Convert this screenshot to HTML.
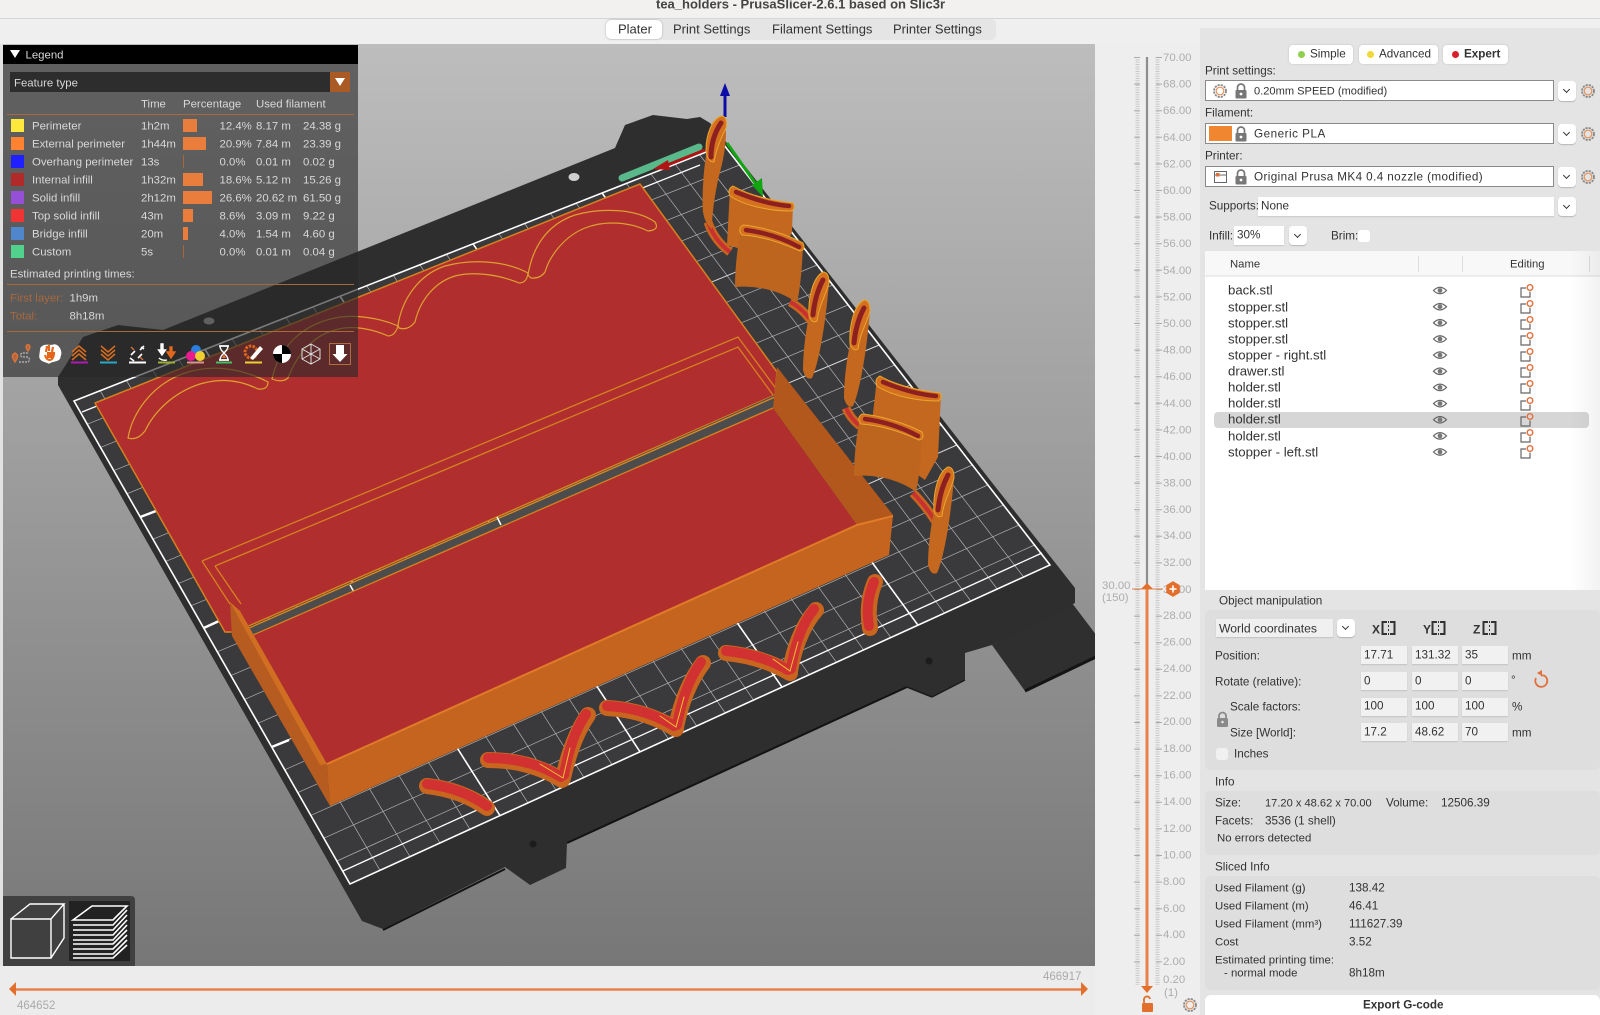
<!DOCTYPE html>
<html><head><meta charset="utf-8"><title>tea_holders - PrusaSlicer</title>
<style>
html,body{margin:0;padding:0;width:1600px;height:1015px;overflow:hidden;background:#ececec;font-family:"Liberation Sans",sans-serif;color:#333}
.a{position:absolute}
.t{position:absolute;transform:translateY(calc(-50% + .7px));white-space:nowrap;font-size:11.7px;line-height:14px}
.l{color:#d8d8d8;font-size:11.4px}
.o{color:#a8683f;font-size:11.4px}
.s{font-size:11.4px}
.f{position:absolute;background:#fff;box-shadow:0 1px 1px rgba(0,0,0,.12)}
.c{position:absolute;background:#fff;border:1px solid #8a8a8a;box-sizing:border-box;left:1205px;width:349px;height:21px}
.d{position:absolute;background:#fff;border-radius:4px;width:18px;box-shadow:0 1px 1px rgba(0,0,0,.2)}
.d:after{content:"";position:absolute;left:6px;top:50%;width:4px;height:4px;margin-top:-4px;border-right:1.6px solid #333;border-bottom:1.6px solid #333;transform:rotate(45deg)}
.i{position:absolute;background:#f1f1f1;box-shadow:0 1px 1px rgba(0,0,0,.12);height:18px;width:46px}
.m{position:absolute;background:#fff;border-radius:4px;height:19px;top:45px;box-shadow:0 0 2px rgba(0,0,0,.15)}
.p{position:absolute;background:#dedede;border-radius:5px;left:1205px;width:395px}
svg{position:absolute;left:0;top:0}
</style></head><body>

<!-- window chrome -->
<div class="a" style="left:0;top:0;width:1600px;height:18px;background:#f2f1ef;border-bottom:1px solid #d6d6d6"></div>
<div class="a" style="left:0;top:19px;width:1600px;height:26px;background:#efefef"></div>
<div class="a" style="left:0;top:966px;width:1200px;height:49px;background:#ececec"></div>
<div class="a" style="left:1095px;top:44px;width:105px;height:971px;background:#eeeeee"></div>
<div class="a" style="left:1200px;top:28px;width:400px;height:987px;background:#e4e4e4"></div>
<div class="t" style="left:656px;top:4px;font-weight:bold;font-size:13px;color:#444">tea_holders - PrusaSlicer-2.6.1 based on Slic3r</div>
<div class="a" style="left:606px;top:19px;width:390px;height:21px;background:#e5e5e5;border-radius:5px"></div>
<div class="a" style="left:606px;top:20px;width:56px;height:19px;background:#fff;border-radius:5px;box-shadow:0 0 2px rgba(0,0,0,.25)"></div>
<div class="t" style="left:618px;top:29px;font-size:13px">Plater</div>
<div class="t" style="left:673px;top:29px;font-size:13px">Print Settings</div>
<div class="t" style="left:772px;top:29px;font-size:13px">Filament Settings</div>
<div class="t" style="left:893px;top:29px;font-size:13px">Printer Settings</div>

<!-- 3D scene -->
<svg width="1600" height="1015" viewBox="0 0 1600 1015" fill="none">
<defs>
<linearGradient id="bg" x1="0" y1="0" x2="0" y2="1"><stop offset="0" stop-color="#bdbdbd"/><stop offset="1" stop-color="#777"/></linearGradient>
<g id="ob4"><path d="M809,316C805,335 803,355 803,370Q806,381 812,378C818,365 825,330 829,283Z" fill="#c4681f"/><path d="M823,272C812,278 808,300 809,316Q812,324 817,321C819,305 826,295 829,283Q829,272 823,272Z" fill="#d5701f" stroke="#e8a72e"/><path d="M823,280Q815,295 813,315" stroke="#8c2020" stroke-width="5" stroke-linecap="round"/></g>
<g id="cap2"><path d="M733,186C750,196 775,201 793,203Q796,209 791,211C770,211 745,206 730,196Q727,189 733,186Z" fill="#d5701f" stroke="#e8a72e"/><path d="M736,192Q765,204 789,206" stroke="#8c2020" stroke-width="4.5" stroke-linecap="round"/></g>
<g id="ob3"><path d="M741,228C760,232 790,240 803,245C802,270 800,290 797,303C780,290 755,285 735,287C735,265 738,245 741,228Z" fill="#bd651f"/><path d="M743,225C765,227 790,236 803,243Q806,250 800,251C780,242 760,236 742,235Q737,229 743,225Z" fill="#d5701f" stroke="#e8a72e"/><path d="M746,230Q775,234 799,247" stroke="#8c2020" stroke-width="4.5" stroke-linecap="round"/></g>
</defs>
<rect x="3" y="44" width="1092" height="922" fill="url(#bg)"/>
<clipPath id="sc"><rect x="3" y="44" width="1092" height="922"/></clipPath>
<g clip-path="url(#sc)">
<!-- rear tab -->
<path d="M1072,603L1100,640L1100,655L1025,691L992,645Z" fill="#2f2f2f"/>
<path d="M1100,655L1025,691" stroke="#141414" stroke-width="3"/>
<!-- bed -->
<path d="M58,385L58,377L67,363L83,337L118,325L163,330L615,148L625,125L653,115L687,119L700,117L710,123L727,143L990,480L1075,588L1075,603L992,645L965,653L965,680L932,697L907,687L567,843L566,868L530,885L505,867L383,929L362,921Z" fill="#2e2e2e"/>
<path d="M907,687L567,843M505,869L383,930" stroke="#131313" stroke-width="2"/>
<path d="M932,697L907,687M965,680L932,697" stroke="#1b1b1b" stroke-width="1.5"/>
<circle cx="929" cy="661" r="3.5" fill="#1c1c1c"/><circle cx="533" cy="844" r="3.5" fill="#1c1c1c"/>
<ellipse cx="574" cy="177" rx="5.5" ry="4" fill="#cfcfcf"/><ellipse cx="209" cy="321" rx="5.5" ry="3.5" fill="#bbb"/>
<!-- print area -->
<path d="M74,401L724,145L1050,565L350,884Z" fill="#3a3a3c"/>
<g stroke="#b0b0b0" stroke-width=".7">
<path d="M100.2,390.7L380,870.3M126.4,380.4L410,856.7M152.6,370L440,843M178.8,359.7L470,829.3M232,338.8L528,802.9M259,328.1L556,790.1M286,317.5L584,777.4M313,306.8L612,764.6M366.6,285.7L668.4,738.9M393.2,275.2L696.8,726M419.8,264.8L725.2,713M446.4,254.3L753.6,700.2M498.8,233.7L809.2,674.7M524.6,223.5L836.4,662.3M550.4,213.3L863.6,649.9M576.2,203.2L890.8,637.5M626.4,183.4L944.4,613.1M650.8,173.8L970.8,601M675.2,164.2L997.2,589M699.6,154.6L1023.6,577"/>
<path d="M87.3,424.2L739.5,165M100.5,447.4L755,185M113.8,470.6L770.6,205M127,493.8L786,225M153,539.2L817,265M165.7,561.4L832.6,285M178.3,583.6L848,305M191,605.8L863.7,325M217.3,651.8L894.7,365M230.9,675.6L910.2,385M244.5,699.4L925.8,405M258.1,723.2L941.3,425M284.7,769.8L972.3,465M297.8,792.6L987.8,485M310.8,815.4L1003.4,505M323.8,838.2L1018.9,525M336.9,861L1034.4,545"/>
<path d="M140.3,517L801.6,245M203.7,628L879.2,345M271.7,747L956.8,445" stroke="#d8d8d8" stroke-width="1"/>
</g>
<g stroke="#fff" stroke-width="1.6">
<path d="M205,349.4L500,815.6M340,296.2L640,751.8M473,243.8L782,687.1M602,193L918,625.2"/>
<path d="M74,401L724,145L1050,565L350,884Z"/>
<path d="M343,871L1042,553M82,412L700,165" stroke-width="1.3"/>
<path d="M140.3,517L156,511M203.7,628L219,621M271.7,747L289,740" stroke-width="2.5"/>
</g>
<!-- axes -->
<path d="M622,178L699,147" stroke="#59b98b" stroke-width="7" stroke-linecap="round"/>
<path d="M725,117V88" stroke="#0c0ca8" stroke-width="3"/><path d="M725,83L720,96H730Z" fill="#0c0ca8"/>
<path d="M727,143L760,190" stroke="#12a512" stroke-width="3"/><path d="M763,197L752,185L762,178Z" fill="#12a512"/>
<path d="M705,150L665,166" stroke="#b01515" stroke-width="3"/><path d="M653,169L668,160L670,170Z" fill="#b01515"/>
<!-- back sheet -->
<path d="M95,403L640,184L777,372L775,395L235,632L225,632Z" fill="#b12e2e" stroke="#d5811f" stroke-width="1.5" stroke-linejoin="round"/>
<!-- gap strip -->
<path d="M240,632L775,395L775,410L253,635Z" fill="#4c4c4c"/>
<path d="M240,632L775,397M253,636L775,409" stroke="#dd8a20" stroke-width="1.3"/>
<path d="M497,517L501,525M350,585L354,592" stroke="#fff" stroke-width="1.5"/>
<g stroke="#dca030" stroke-width="1.2" fill="none">
<path d="M528,275C532,250 545,225 575,215C600,208 635,208 655,222Q660,230 648,231C630,222 605,220 585,228C565,236 550,255 545,272Q540,279 531,278Z"/>
<path d="M398,325C402,300 418,275 445,266C475,258 508,262 528,273Q527,283 519,283C500,275 475,271 455,276C435,282 420,300 415,322Q408,331 399,328Z"/>
<path d="M272,379C278,350 300,325 335,318C355,314 380,318 398,326Q395,336 388,336C370,328 350,325 335,330C315,335 298,352 288,378Q282,383 272,379Z"/>
<path d="M128,438C132,415 150,385 185,373C215,363 245,370 268,382Q268,390 258,389C240,380 220,378 200,384C175,392 155,410 145,431Q137,441 128,438Z"/>
</g>
<path d="M202,561L738,337L777,390M202,561L230,604M215,566L738,347L773,395M215,566L241,604M230,632L225,632" stroke="#d5811f" stroke-width="1.3"/>
<!-- drawer -->
<path d="M253,635L773,408L857,525L327,764Z" fill="#b12e2e"/>
<path d="M253,635L773,408" stroke="#d5811f" stroke-width="1.3"/>
<path d="M777,367L893,515L857,525L773,408Z" fill="#b3581d"/>
<path d="M230,602L240,611L327,764L330,806L232,636Z" fill="#b75c20"/>
<path d="M230,602L240,611L327,764L320,765Z" fill="#d06f22"/>
<path d="M327,764L857,525L893,515L889,555L330,806Z" fill="#c4641f"/>
<path d="M327,764L857,525L893,516" stroke="#e07c28" stroke-width="2"/>
<!-- flat pieces -->
<g fill="none" stroke-linecap="round">
<g stroke="#c8651f" stroke-width="16">
<path d="M427,786Q462,790 487,808"/>
<path d="M488,760Q530,760 562,780"/><path d="M563,778Q572,738 588,715"/>
<path d="M607,708Q645,710 676,729"/><path d="M676,727Q684,688 703,663"/>
<path d="M726,653Q760,656 790,673"/><path d="M790,671Q797,632 816,610"/>
<path d="M875,582Q866,603 870,628"/>
</g>
<g stroke="#d23131" stroke-width="10">
<path d="M427,784Q462,788 487,806"/>
<path d="M488,758Q530,758 561,777"/><path d="M564,775Q571,736 586,714"/>
<path d="M607,706Q645,708 674,726"/><path d="M677,725Q684,686 701,662"/>
<path d="M726,651Q760,654 788,670"/><path d="M791,669Q797,630 814,609"/>
<path d="M874,582Q865,603 869,626"/>
</g>
<g stroke="#e8c22e" stroke-width="1"><path d="M540,764L563,778L570,748M660,716L676,727L684,697M773,659L790,671L798,642"/></g>
</g>
<!-- feet -->
<g fill="none"><path d="M708,222Q714,240 730,252M790,302Q802,308 812,322M846,408Q850,418 860,426M913,493Q925,505 936,522" stroke="#c8651f" stroke-width="9"/><path d="M708,222Q714,240 730,252M790,302Q802,308 812,322M846,408Q850,418 860,426M913,493Q925,505 936,522" stroke="#c93030" stroke-width="4"/></g>
<!-- standing holders -->
<path d="M707,150C703,170 702,200 703,212Q705,224 712,229C712,210 716,190 718,180C722,165 726,150 726,130Z" fill="#c4681f"/>
<path d="M722,116C712,118 706,135 706,150Q707,162 714,162C716,150 720,140 726,128Q728,117 722,116Z" fill="#d5701f" stroke="#e8a72e"/>
<path d="M721,123Q711,138 711,157" stroke="#8c2020" stroke-width="5" stroke-linecap="round"/>
<path d="M730,188C745,200 775,205 793,204L792,232L780,260L727,245Z" fill="#c4681f"/><use href="#cap2"/>
<use href="#ob3"/>
<use href="#ob4"/>
<use href="#ob4" transform="translate(41,28)"/>
<path d="M877,378C892,390 922,395 941,394L938,457L925,480L870,440Z" fill="#c4681f"/><use href="#cap2" transform="translate(147,190)"/>
<use href="#ob3" transform="translate(119,189)"/>
<use href="#ob4" transform="translate(125,195)"/>
</g>
<!-- left strip -->
<rect x="0" y="44" width="3" height="922" fill="#e2e2e2"/>
</svg>

<!-- legend -->
<div class="a" style="left:3px;top:45px;width:355px;height:332px;background:rgba(40,40,40,.62)"></div>
<div class="a" style="left:3px;top:45px;width:355px;height:19px;background:#000"></div>
<div class="t l" style="left:25.5px;top:55px">Legend</div>
<div class="a" style="left:10px;top:72px;width:320px;height:20px;background:#2d2d2d"></div>
<div class="a" style="left:330px;top:72px;width:20px;height:20px;background:#a95a25"></div>
<div class="t l" style="left:14px;top:83px">Feature type</div>
<div class="t l" style="left:141px;top:104px">Time</div><div class="t l" style="left:183px;top:104px">Percentage</div><div class="t l" style="left:256px;top:104px">Used filament</div>
<div class="a" style="left:7px;top:114px;width:347px;height:1px;background:#a9673c"></div>
<div class="a" style="left:11px;top:119px;width:13px;height:13px;background:#ffe83c"></div>
<div class="a" style="left:11px;top:137px;width:13px;height:13px;background:#ff8230"></div>
<div class="a" style="left:11px;top:155px;width:13px;height:13px;background:#1f1fff"></div>
<div class="a" style="left:11px;top:173px;width:13px;height:13px;background:#b02a2a"></div>
<div class="a" style="left:11px;top:191px;width:13px;height:13px;background:#9650d8"></div>
<div class="a" style="left:11px;top:209px;width:13px;height:13px;background:#f03434"></div>
<div class="a" style="left:11px;top:227px;width:13px;height:13px;background:#4f86cc"></div>
<div class="a" style="left:11px;top:245px;width:13px;height:13px;background:#50d28c"></div>
<div class="a" style="left:183px;top:119px;width:13.5px;height:12.5px;background:#e87d3c"></div>
<div class="a" style="left:183px;top:137px;width:22.5px;height:12.5px;background:#e87d3c"></div>
<div class="a" style="left:183px;top:155px;width:1px;height:12.5px;background:#a9673c"></div>
<div class="a" style="left:183px;top:173px;width:20px;height:12.5px;background:#e87d3c"></div>
<div class="a" style="left:183px;top:191px;width:28.5px;height:12.5px;background:#e87d3c"></div>
<div class="a" style="left:183px;top:209px;width:9.5px;height:12.5px;background:#e87d3c"></div>
<div class="a" style="left:183px;top:227px;width:4.5px;height:12.5px;background:#e87d3c"></div>
<div class="a" style="left:183px;top:245px;width:1px;height:12.5px;background:#a9673c"></div>

<div class="t l" style="left:32px;top:125.5px">Perimeter</div><div class="t l" style="left:141px;top:125.5px">1h2m</div><div class="t l" style="left:219.5px;top:125.5px">12.4%</div><div class="t l" style="left:256px;top:125.5px">8.17 m</div><div class="t l" style="left:303px;top:125.5px">24.38 g</div>
<div class="t l" style="left:32px;top:143.5px">External perimeter</div><div class="t l" style="left:141px;top:143.5px">1h44m</div><div class="t l" style="left:219.5px;top:143.5px">20.9%</div><div class="t l" style="left:256px;top:143.5px">7.84 m</div><div class="t l" style="left:303px;top:143.5px">23.39 g</div>
<div class="t l" style="left:32px;top:161.5px">Overhang perimeter</div><div class="t l" style="left:141px;top:161.5px">13s</div><div class="t l" style="left:219.5px;top:161.5px">0.0%</div><div class="t l" style="left:256px;top:161.5px">0.01 m</div><div class="t l" style="left:303px;top:161.5px">0.02 g</div>
<div class="t l" style="left:32px;top:179.5px">Internal infill</div><div class="t l" style="left:141px;top:179.5px">1h32m</div><div class="t l" style="left:219.5px;top:179.5px">18.6%</div><div class="t l" style="left:256px;top:179.5px">5.12 m</div><div class="t l" style="left:303px;top:179.5px">15.26 g</div>
<div class="t l" style="left:32px;top:197.5px">Solid infill</div><div class="t l" style="left:141px;top:197.5px">2h12m</div><div class="t l" style="left:219.5px;top:197.5px">26.6%</div><div class="t l" style="left:256px;top:197.5px">20.62 m</div><div class="t l" style="left:303px;top:197.5px">61.50 g</div>
<div class="t l" style="left:32px;top:215.5px">Top solid infill</div><div class="t l" style="left:141px;top:215.5px">43m</div><div class="t l" style="left:219.5px;top:215.5px">8.6%</div><div class="t l" style="left:256px;top:215.5px">3.09 m</div><div class="t l" style="left:303px;top:215.5px">9.22 g</div>
<div class="t l" style="left:32px;top:233.5px">Bridge infill</div><div class="t l" style="left:141px;top:233.5px">20m</div><div class="t l" style="left:219.5px;top:233.5px">4.0%</div><div class="t l" style="left:256px;top:233.5px">1.54 m</div><div class="t l" style="left:303px;top:233.5px">4.60 g</div>
<div class="t l" style="left:32px;top:251.5px">Custom</div><div class="t l" style="left:141px;top:251.5px">5s</div><div class="t l" style="left:219.5px;top:251.5px">0.0%</div><div class="t l" style="left:256px;top:251.5px">0.01 m</div><div class="t l" style="left:303px;top:251.5px">0.04 g</div>
<div class="t l" style="left:10px;top:274px">Estimated printing times:</div>
<div class="a" style="left:7px;top:284px;width:347px;height:1px;background:#a9673c"></div>
<div class="t o" style="left:10px;top:297.5px">First layer:</div><div class="t l" style="left:69.5px;top:297.5px">1h9m</div>
<div class="t o" style="left:10px;top:315.5px">Total:</div><div class="t l" style="left:69.5px;top:315.5px">8h18m</div>
<div class="a" style="left:7px;top:331px;width:347px;height:1px;background:#a9673c"></div>

<!-- overlay icons -->
<svg width="1600" height="1015" viewBox="0 0 1600 1015" fill="none">
<defs>
<g id="gear"><circle r="6" stroke="#888" stroke-width="1.8" stroke-dasharray="2.2 1"/><circle r="3.8" stroke="#e4925a" stroke-width="1.2"/></g>
<g id="lock"><rect x="-5.5" y="-1" width="11" height="8.5" rx="1" fill="#777"/><path d="M-3.5,-1V-3.5A3.5,3.5 0 0 1 3.5,-3.5V-1" stroke="#777" stroke-width="1.7"/><circle cy="3" r="1.4" fill="#fff"/></g>
<g id="eye"><path d="M-6.5,0Q0,-6.5 6.5,0Q0,6.5 -6.5,0Z" stroke="#666" stroke-width="1.2"/><circle r="2.4" fill="#777"/></g>
<g id="ed"><path d="M-1,-3H-6V6H3V0.5" stroke="#666" stroke-width="1.2"/><circle cx="3" cy="-3.5" r="2.8" stroke="#e2703a" stroke-width="1.4"/></g>
<g id="axis"><path d="M-1.5,-6H-6V6H-1.5M1.5,-6H6V6H1.5" stroke="#333" stroke-width="2"/><path d="M0,-7V7" stroke="#333" stroke-dasharray="2 2"/></g>
</defs>
<path d="M10,50H20L15,58Z" fill="#fff"/>
<path d="M335,78H345L340,86Z" fill="#fff"/>
<!-- legend toolbar -->
<g stroke-width="1.4">
<path d="M15,362C11,356 12,355 15,353C18,355 19,356 15,362Z" fill="#b8643a" stroke="#d9743a"/><path d="M28,351C25,347 26,345 28,344.5C30,345 31,347 28,351Z" fill="#b8643a" stroke="#d9743a"/>
<path d="M19,362H28Q31,360 28,357H22Q19,355 22,353H29" stroke="#aaa" stroke-dasharray="2 1"/>
<path d="M41,348C45,343 50,347 54,345C59,345 62,352 60,356C60,362 52,360 49,363C45,361 39,361 40,355Z" fill="#fff" stroke="#fff"/><path d="M46,352L47,346M49,351V345M52,352L53,347M45,355C47,362 54,362 54,352" stroke="#e2671c" stroke-width="2.2"/><path d="M47,352H53V358H47Z" fill="#e2671c" stroke="none"/>
<path d="M72,352L79,346L86,352M72,356L79,350L86,356M72,360L79,354L86,360" stroke="#d96e22" stroke-width="1.5"/><path d="M71,362.5H88" stroke="#b018b8" stroke-width="2"/>
<path d="M101,346L108,352L115,346M101,350L108,356L115,350M101,354L108,360L115,354" stroke="#d96e22" stroke-width="1.5"/><path d="M100,362.5H117" stroke="#28a8c8" stroke-width="2"/>
<path d="M131,355L135,351M140,350L144,346M138,358L142,354M130,358L134,361M141,347L144,349" stroke="#fff" stroke-width="1.6"/><path d="M131,347L134,350M140,357L143,360" stroke="#e2703a" stroke-width="1.3"/><path d="M129,362.5H146" stroke="#fff" stroke-width="2"/>
<path d="M161,344V350H158.5L162,355L165.5,350H163V344Z" fill="#fff" stroke="#fff"/><path d="M170,347V352H167L171,358L175,352H172V347Z" fill="#e2671c" stroke="#e2671c"/><path d="M159,358Q162,361 167,360" stroke="#fff"/><path d="M158,362.5H175" stroke="#9ab030" stroke-width="2"/>
<circle cx="196" cy="350" r="5" fill="#2a80e0"/><circle cx="191" cy="356" r="5" fill="#e81c8c"/><circle cx="200" cy="356" r="5" fill="#f0d030"/><path d="M187,362.5H204" stroke="#d89090" stroke-width="2"/>
<path d="M219,346H229M219,360H229" stroke="#fff" stroke-width="1.6"/><path d="M220,346C220,352 228,354 228,360H220C220,354 228,352 228,346Z" stroke="#fff"/><path d="M222,358H226L224,354Z" fill="#e2703a"/><path d="M216,362.5H232" stroke="#40c060" stroke-width="2"/>
<circle cx="251" cy="352" r="6" stroke="#e2671c" stroke-width="3" stroke-dasharray="2.5 1.2"/><path d="M250,358L260,346L263,349L253,360Z" fill="#fff"/><path d="M245,362.5H262" stroke="#f0d030" stroke-width="2"/>
<circle cx="282" cy="354" r="9" fill="#fff"/><path d="M282,354V345A9,9 0 0 1 291,354ZM282,354V363A9,9 0 0 1 273,354Z" fill="#000"/>
<path d="M311,344L320,349V359L311,364L302,359V349ZM302,349L311,354L320,349M311,354V364M311,344V354L302,359M311,354L320,359" stroke="#ddd" stroke-width="1"/>
<rect x="329.5" y="343.5" width="21" height="21" stroke="#b06c42" stroke-width="1"/><path d="M336,345H344V354H347.5L340,362L332.5,354H336Z" fill="#fff"/>
</g>
<!-- view toolbar -->
<path d="M3,896H131Q135,896 135,900V966H3Z" fill="#404040"/>
<rect x="69" y="901" width="61" height="60" fill="#222"/>
<g stroke="#fff" stroke-width="1.4"><path d="M11,919H51V958H11ZM11,919L30,904H64L51,919M64,904V938L51,958"/>
<path d="M73,920L92,906H127L113,920ZM73,925H113L127,910M73,930H113L127,915M73,935H113L127,920M73,940H113L127,925M73,944H113L127,930M73,949H113L127,935M73,954H113L127,940M73,958H113L127,945" stroke-width="1.6"/></g>
<!-- bottom slider -->
<path d="M15,989.5H1085" stroke="#e8824a" stroke-width="2.4"/>
<path d="M9,989L16,982V996Z" fill="#e2702c"/><path d="M1088,989L1081,982V996Z" fill="#e2702c"/>
<text x="17" y="1009" font-size="11.5" fill="#aaa" font-family="Liberation Sans">464652</text>
<text x="1043" y="980" font-size="11.5" fill="#aaa" font-family="Liberation Sans">466917</text>
<!-- vertical slider -->
<path d="M1137.5,57V985" stroke="#c8c8c8" stroke-width="4" stroke-dasharray="1 1.33"/>
<path d="M1157.5,57V985" stroke="#c8c8c8" stroke-width="4" stroke-dasharray="1 1.33"/>
<path d="M1137,57V985" stroke="#aaa" stroke-width="6" stroke-dasharray="1 25.6"/>
<path d="M1159,57V985" stroke="#aaa" stroke-width="6" stroke-dasharray="1 25.6"/>
<path d="M1147,57V585" stroke="#8e8e8e" stroke-width="2.2"/>
<path d="M1147,585V986" stroke="#e8824a" stroke-width="3"/>
<path d="M1132,589H1163" stroke="#e8824a" stroke-width="1"/>
<path d="M1141,589L1147,583L1153,589Z" fill="#e2702c"/><path d="M1141,986H1153L1147,993Z" fill="#e2702c"/>
<g font-family="Liberation Sans" font-size="11.4" fill="#adadad">
<text x="1163" y="61">70.00</text><text x="1163" y="87.6">68.00</text><text x="1163" y="114.2">66.00</text><text x="1163" y="140.8">64.00</text><text x="1163" y="167.4">62.00</text><text x="1163" y="194">60.00</text><text x="1163" y="220.6">58.00</text><text x="1163" y="247.2">56.00</text><text x="1163" y="273.8">54.00</text><text x="1163" y="300.4">52.00</text><text x="1163" y="327">50.00</text><text x="1163" y="353.6">48.00</text><text x="1163" y="380.2">46.00</text><text x="1163" y="406.8">44.00</text><text x="1163" y="433.4">42.00</text><text x="1163" y="460">40.00</text><text x="1163" y="486.6">38.00</text><text x="1163" y="513">36.00</text><text x="1163" y="539">34.00</text><text x="1163" y="566">32.00</text><text x="1163" y="593">30.00</text><text x="1163" y="619">28.00</text><text x="1163" y="645.5">26.00</text><text x="1163" y="672">24.00</text><text x="1163" y="699">22.00</text><text x="1163" y="725">20.00</text><text x="1163" y="752">18.00</text><text x="1163" y="778.5">16.00</text><text x="1163" y="805">14.00</text><text x="1163" y="832">12.00</text><text x="1163" y="858.5">10.00</text><text x="1163" y="885">8.00</text><text x="1163" y="912">6.00</text><text x="1163" y="938">4.00</text><text x="1163" y="965">2.00</text><text x="1163" y="983">0.20</text><text x="1164" y="996">(1)</text>
<text x="1102" y="589">30.00</text><text x="1102" y="601">(150)</text>
</g>
<path d="M1173,582L1179,585.5V592.5L1173,596L1167,592.5V585.5Z" fill="#e2702c" stroke="#e2702c" stroke-width="1.5"/><path d="M1169.5,589H1176.5M1173,585.5V592.5" stroke="#fff" stroke-width="1.6"/>
<rect x="1142" y="1003" width="11" height="9" rx="1" fill="#e2702c"/><path d="M1144,1003V1000A3,3 0 0 1 1150,999" stroke="#e2702c" stroke-width="1.8"/>
<use href="#gear" x="1190" y="1005"/>
</svg>

<!-- sidebar -->
<div class="m" style="left:1289px;width:64px"></div><div class="m" style="left:1359px;width:79px"></div><div class="m" style="left:1443px;width:65px"></div>
<div class="a" style="left:1298px;top:51px;width:7px;height:7px;border-radius:50%;background:#8fd14f"></div>
<div class="a" style="left:1367px;top:51px;width:7px;height:7px;border-radius:50%;background:#f0d838"></div>
<div class="a" style="left:1452px;top:51px;width:7px;height:7px;border-radius:50%;background:#d8202a"></div>
<div class="t" style="left:1310px;top:54px">Simple</div><div class="t" style="left:1379px;top:54px">Advanced</div><div class="t" style="left:1464px;top:54px;font-weight:bold">Expert</div>

<div class="t" style="left:1205px;top:70.5px">Print settings:</div>
<div class="c" style="top:80px"></div><div class="t" style="left:1254px;top:91px;font-size:11.1px">0.20mm SPEED (modified)</div>
<div class="d" style="left:1558px;top:81px;height:20px"></div>
<div class="t" style="left:1205px;top:113px">Filament:</div>
<div class="c" style="top:123px"></div><div class="a" style="left:1209px;top:126px;width:23px;height:15px;background:#f0862f"></div><div class="t" style="left:1254px;top:134px;letter-spacing:.5px">Generic PLA</div>
<div class="d" style="left:1558px;top:124px;height:20px"></div>
<div class="t" style="left:1205px;top:156px">Printer:</div>
<div class="c" style="top:166px"></div><div class="t" style="left:1254px;top:177px;letter-spacing:.4px">Original Prusa MK4 0.4 nozzle (modified)</div>
<div class="d" style="left:1558px;top:167px;height:20px"></div>
<div class="t" style="left:1209px;top:206px">Supports:</div>
<div class="f" style="left:1258px;top:197px;width:296px;height:19px"></div><div class="t" style="left:1261px;top:205.5px">None</div>
<div class="d" style="left:1558px;top:197px;height:19px"></div>
<div class="t" style="left:1209px;top:236px">Infill:</div>
<div class="f" style="left:1234px;top:226px;width:50px;height:19px"></div><div class="t" style="left:1237px;top:235px">30%</div>
<div class="d" style="left:1289px;top:226px;height:19px"></div>
<div class="t" style="left:1331px;top:236px">Brim:</div>
<div class="a" style="left:1358px;top:230px;width:12px;height:12px;background:#fff;border-radius:3px"></div>

<!-- object list -->
<div class="a" style="left:1205px;top:251px;width:395px;height:339px;background:#fff"></div>
<div class="a" style="left:1205px;top:251px;width:395px;height:26px;background:#f8f8f8;border-bottom:2px solid #ececec;box-sizing:border-box"></div>
<div class="a" style="left:1418px;top:256px;width:1px;height:16px;background:#ddd"></div><div class="a" style="left:1462px;top:256px;width:1px;height:16px;background:#ddd"></div><div class="a" style="left:1589px;top:256px;width:1px;height:16px;background:#ddd"></div>
<div class="t" style="left:1230px;top:264px;font-size:11.3px">Name</div><div class="t" style="left:1510px;top:264px;font-size:11.3px">Editing</div>
<div class="a" style="left:1214px;top:412px;width:375px;height:15.5px;background:#d6d6d6;border-radius:4px"></div>
<div class="t" style="left:1228px;top:290.3px;font-size:13.2px">back.stl</div>
<div class="t" style="left:1228px;top:306.5px;font-size:13.2px">stopper.stl</div>
<div class="t" style="left:1228px;top:322.6px;font-size:13.2px">stopper.stl</div>
<div class="t" style="left:1228px;top:338.7px;font-size:13.2px">stopper.stl</div>
<div class="t" style="left:1228px;top:354.9px;font-size:13.2px">stopper - right.stl</div>
<div class="t" style="left:1228px;top:371px;font-size:13.2px">drawer.stl</div>
<div class="t" style="left:1228px;top:387.2px;font-size:13.2px">holder.stl</div>
<div class="t" style="left:1228px;top:403.3px;font-size:13.2px">holder.stl</div>
<div class="t" style="left:1228px;top:419.4px;font-size:13.2px">holder.stl</div>
<div class="t" style="left:1228px;top:435.5px;font-size:13.2px">holder.stl</div>
<div class="t" style="left:1228px;top:451.7px;font-size:13.2px">stopper - left.stl</div>
<div class="a" style="left:1570px;top:251px;width:30px;height:339px;background:linear-gradient(90deg,rgba(0,0,0,0),rgba(0,0,0,.05))"></div>

<!-- manipulation -->
<div class="t" style="left:1219px;top:601px">Object manipulation</div>
<div class="p" style="top:610px;height:160px"></div>
<div class="a" style="left:1216px;top:619px;width:117px;height:18px;background:#f0f0f0;box-shadow:0 1px 1px rgba(0,0,0,.12)"></div><div class="t" style="left:1219px;top:627.5px;font-size:12.2px">World coordinates</div>
<div class="d" style="left:1337px;top:619px;height:18px"></div>
<div class="t" style="left:1372px;top:628.5px;font-weight:bold;font-size:12px">X</div><div class="t" style="left:1423px;top:628.5px;font-weight:bold;font-size:12px">Y</div><div class="t" style="left:1473px;top:628.5px;font-weight:bold;font-size:12px">Z</div>
<div class="t" style="left:1215px;top:656px">Position:</div>
<div class="i" style="left:1361px;top:646px"></div><div class="i" style="left:1412px;top:646px"></div><div class="i" style="left:1462px;top:646px"></div>
<div class="t" style="left:1364px;top:655px">17.71</div><div class="t" style="left:1415px;top:655px">131.32</div><div class="t" style="left:1465px;top:655px">35</div><div class="t" style="left:1512px;top:656px">mm</div>
<div class="t" style="left:1215px;top:681.5px">Rotate (relative):</div>
<div class="i" style="left:1361px;top:672px"></div><div class="i" style="left:1412px;top:672px"></div><div class="i" style="left:1462px;top:672px"></div>
<div class="t" style="left:1364px;top:681px">0</div><div class="t" style="left:1415px;top:681px">0</div><div class="t" style="left:1465px;top:681px">0</div><div class="t" style="left:1511px;top:680px">°</div>
<div class="t" style="left:1230px;top:707px">Scale factors:</div>
<div class="i" style="left:1361px;top:698px"></div><div class="i" style="left:1412px;top:698px"></div><div class="i" style="left:1462px;top:698px"></div>
<div class="t" style="left:1364px;top:706px">100</div><div class="t" style="left:1415px;top:706px">100</div><div class="t" style="left:1465px;top:706px">100</div><div class="t" style="left:1512px;top:707px">%</div>
<div class="t" style="left:1230px;top:733px">Size [World]:</div>
<div class="i" style="left:1361px;top:723px"></div><div class="i" style="left:1412px;top:723px"></div><div class="i" style="left:1462px;top:723px"></div>
<div class="t" style="left:1364px;top:732px">17.2</div><div class="t" style="left:1415px;top:732px">48.62</div><div class="t" style="left:1465px;top:732px">70</div><div class="t" style="left:1512px;top:733px">mm</div>
<div class="a" style="left:1216px;top:748px;width:12px;height:12px;background:#f0f0f0;border-radius:3px"></div><div class="t" style="left:1234px;top:754px">Inches</div>

<div class="t" style="left:1215px;top:782px">Info</div>
<div class="p" style="top:791px;height:64px"></div>
<div class="t" style="left:1215px;top:803px">Size:</div><div class="t" style="left:1265px;top:803px;font-size:11.1px">17.20 x 48.62 x 70.00</div><div class="t" style="left:1386px;top:803px">Volume:</div><div class="t" style="left:1441px;top:803px">12506.39</div>
<div class="t" style="left:1215px;top:821px">Facets:</div><div class="t" style="left:1265px;top:821px">3536 (1 shell)</div>
<div class="t s" style="left:1217px;top:838px">No errors detected</div>

<div class="t" style="left:1215px;top:867px">Sliced Info</div>
<div class="p" style="top:876px;height:114px"></div>
<div class="t s" style="left:1215px;top:888px">Used Filament (g)</div><div class="t" style="left:1349px;top:888px">138.42</div>
<div class="t s" style="left:1215px;top:906px">Used Filament (m)</div><div class="t" style="left:1349px;top:906px">46.41</div>
<div class="t s" style="left:1215px;top:924px">Used Filament (mm³)</div><div class="t" style="left:1349px;top:924px">111627.39</div>
<div class="t s" style="left:1215px;top:942px">Cost</div><div class="t" style="left:1349px;top:942px">3.52</div>
<div class="t s" style="left:1215px;top:960px">Estimated printing time:</div>
<div class="t s" style="left:1224px;top:973px">- normal mode</div><div class="t" style="left:1349px;top:973px">8h18m</div>
<div class="a" style="left:1205px;top:995px;width:395px;height:20px;background:#fff;border-radius:6px 6px 0 0"></div>
<div class="t" style="left:1363px;top:1005px;font-weight:bold;font-size:11.7px">Export G-code</div>

<!-- sidebar icons -->
<svg width="1600" height="1015" viewBox="0 0 1600 1015" fill="none">
<use href="#gear" x="1220" y="91"/><use href="#lock" x="1241" y="91"/><use href="#gear" x="1588" y="91"/>
<use href="#lock" x="1241" y="134"/><use href="#gear" x="1588" y="134"/>
<rect x="1214.5" y="171.5" width="12" height="11" stroke="#666"/><path d="M1214.5,175H1226.5" stroke="#666"/><rect x="1216" y="173" width="3.5" height="3.5" fill="#e2703a"/>
<use href="#lock" x="1241" y="177"/><use href="#gear" x="1588" y="177"/>
<use href="#eye" x="1440" y="290.5"/><use href="#eye" x="1440" y="306.7"/><use href="#eye" x="1440" y="322.8"/><use href="#eye" x="1440" y="339"/><use href="#eye" x="1440" y="355.1"/><use href="#eye" x="1440" y="371.3"/><use href="#eye" x="1440" y="387.4"/><use href="#eye" x="1440" y="403.6"/><use href="#eye" x="1440" y="419.7"/><use href="#eye" x="1440" y="435.9"/><use href="#eye" x="1440" y="452"/>
<use href="#ed" x="1527" y="291"/><use href="#ed" x="1527" y="307"/><use href="#ed" x="1527" y="323"/><use href="#ed" x="1527" y="339"/><use href="#ed" x="1527" y="355"/><use href="#ed" x="1527" y="371"/><use href="#ed" x="1527" y="387"/><use href="#ed" x="1527" y="404"/><use href="#ed" x="1527" y="420"/><use href="#ed" x="1527" y="436"/><use href="#ed" x="1527" y="452"/>
<use href="#axis" x="1388.5" y="628"/><use href="#axis" x="1438.5" y="628"/><use href="#axis" x="1489.5" y="628"/>
<path d="M1536,675A6,6 0 1 0 1544,672.5L1541,672.5" stroke="#e2703a" stroke-width="1.8" transform="translate(0,3)"/><path d="M1537,673L1542,670V676Z" fill="#e2703a"/>
<g transform="translate(1222.5,720)"><rect x="-5.5" y="-2" width="11" height="9" rx="1.5" fill="#8a8a8a"/><path d="M-3.5,-2V-4A3.5,3.5 0 0 1 3.5,-4V-2" stroke="#8a8a8a" stroke-width="1.8"/><circle cy="2" r="1.3" fill="#e4e4e4"/></g>
</svg>
</body></html>
